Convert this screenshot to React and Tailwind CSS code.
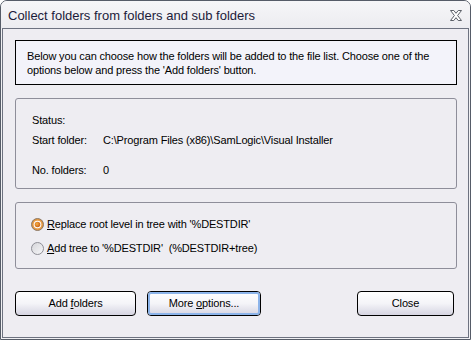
export default function App() {
  const font = { fontFamily: '"Liberation Sans", Arial, sans-serif' };

  return (
    <div
      className="w-[471px] h-[340px] flex flex-col border border-[#565c68] rounded-t-[7px] bg-[#f0f0f3] overflow-hidden text-[11px] text-black"
      style={font}
    >
      {/* Title bar */}
      <div className="h-[27px] shrink-0 flex items-center justify-between pl-[7px] pr-[8px] bg-gradient-to-b from-[#f6f6f8] to-[#ececf0]">
        <span className="text-[13px] text-[#1c1b3a] leading-none pt-[2px]">
          Collect folders from folders and sub folders
        </span>
        <svg width="12" height="11" viewBox="0 0 12 11" className="mt-[2px]">
          <path
            d="M0.5 0.5 H3.8 L6 3.3 L8.2 0.5 H11.5 L7.6 5.5 L11.5 10.5 H8.2 L6 7.7 L3.8 10.5 H0.5 L4.4 5.5 Z"
            fill="#fff"
            stroke="#5c6068"
            strokeWidth="1"
          />
        </svg>
      </div>

      {/* Client area */}
      <div className="flex-1 mx-[1px] mb-[1px] border border-[#6d7280] bg-[#eeedf2] flex flex-col pt-[11px] pl-[12px] pr-[11px] tracking-[-0.15px]">
        {/* Info */}
        <div className="h-[45px] border border-black bg-[#f3f3fa] pl-[11px] pt-[8px] leading-[14px]">
          <div>Below you can choose how the folders will be added to the file list. Choose one of the</div>
          <div>options below and press the 'Add folders' button.</div>
        </div>

        {/* Status */}
        <div className="mt-[13px] h-[91px] border border-[#8e8e9a] rounded-[3px] pl-[16px] pt-[14px] flex flex-col">
          <div className="h-[14px] leading-[14px]">Status:</div>
          <div className="mt-[6px] h-[14px] leading-[14px] flex">
            <span className="w-[71px]">Start folder:</span>
            <span>C:\Program Files (x86)\SamLogic\Visual Installer</span>
          </div>
          <div className="mt-[16px] h-[14px] leading-[14px] flex">
            <span className="w-[71px]">No. folders:</span>
            <span>0</span>
          </div>
        </div>

        {/* Options */}
        <div className="mt-[13px] h-[67px] border border-[#8e8e9a] rounded-[3px] pl-[15px] pt-[14px] flex flex-col gap-[10px]">
          <div className="flex items-center h-[14px]">
            <RadioOn />
            <span className="ml-[3px]">
              <u>R</u>eplace root level in tree with '%DESTDIR'
            </span>
          </div>
          <div className="flex items-center h-[14px]">
            <RadioOff />
            <span className="ml-[3px]">
              <u>A</u>dd tree to '%DESTDIR'&nbsp; (%DESTDIR+tree)
            </span>
          </div>
        </div>

        {/* Buttons */}
        <div className="mt-[22px] flex items-center">
          <Button className="w-[121px]">
            <span>
              Add <u>f</u>olders
            </span>
          </Button>
          <Button className="w-[114px] ml-[11px]" focused>
            <span>
              More <u>o</u>ptions...
            </span>
          </Button>
          <Button className="w-[97px] ml-auto mr-[3px]">
            <span>Close</span>
          </Button>
        </div>
      </div>
    </div>
  );
}

function Button({ children, className = "", focused = false }) {
  return (
    <div
      className={`h-[25px] rounded-[4px] border border-black flex items-center justify-center bg-gradient-to-b from-white via-[#f4f4f8] to-[#d6d5e2] ${className}`}
    >
      <div
        className={`w-full h-full rounded-[3px] flex items-center justify-center ${
          focused ? "border-2 border-[#8cb4ea]" : ""
        }`}
      >
        {children}
      </div>
    </div>
  );
}

function RadioOn() {
  return (
    <svg width="13" height="13" viewBox="0 0 13 13">
      <defs>
        <radialGradient id="rg1" cx="0.5" cy="0.5" r="0.5">
          <stop offset="0" stopColor="#f8d6a0" />
          <stop offset="1" stopColor="#e08a2c" />
        </radialGradient>
        <radialGradient id="dot1" cx="0.4" cy="0.4" r="0.6">
          <stop offset="0" stopColor="#f9b040" />
          <stop offset="1" stopColor="#c8621a" />
        </radialGradient>
      </defs>
      <circle cx="6.5" cy="6.5" r="6" fill="url(#rg1)" stroke="#8b7a6a" strokeWidth="1" />
      <circle cx="6.5" cy="6.5" r="3.8" fill="#fff" />
      <circle cx="6.5" cy="6.5" r="2.8" fill="url(#dot1)" />
    </svg>
  );
}

function RadioOff() {
  return (
    <svg width="13" height="13" viewBox="0 0 13 13">
      <defs>
        <linearGradient id="rg2" x1="0" y1="0" x2="1" y2="1">
          <stop offset="0" stopColor="#d4d4d8" />
          <stop offset="1" stopColor="#f8f8fa" />
        </linearGradient>
      </defs>
      <circle cx="6.5" cy="6.5" r="6" fill="url(#rg2)" stroke="#8e8e96" strokeWidth="1" />
    </svg>
  );
}
